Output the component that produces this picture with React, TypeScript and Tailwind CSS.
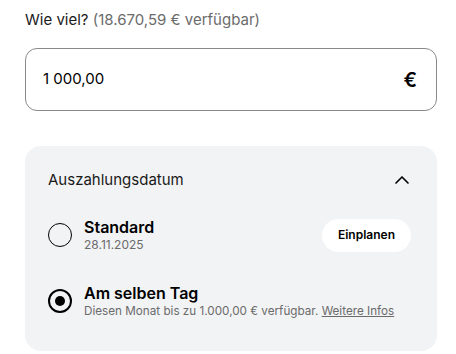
import React from "react";

function Radio({ checked }: { checked: boolean }) {
    return (
        <div
            className={`w-6 h-6 rounded-full border-black flex items-center justify-center shrink-0 ${checked ? "border-[2.5px]" : "border-[1.3px]"}`}
        >
            {checked && <div className="w-[10px] h-[10px] rounded-full bg-black"></div>}
        </div>
    );
}

export default function App() {
    return (
        <div className="w-[456px] h-[354px] bg-white pl-[25px] pr-[19px] pt-[10px]" style={{ fontFamily: "Inter, 'Noto Sans', sans-serif" }}>
            <div className="text-[15px] text-[#1a1a1a] leading-5">
                Wie viel? <span className="text-[#6b6b6b]">(18.670,59 € verfügbar)</span>
            </div>
            <div className="mt-[18px] h-[63px] rounded-[12px] border border-[#8a8a8a] flex items-center justify-between pl-[17px] pr-[19px]">
                <span className="text-[15px] text-black">1 000,00</span>
                <span className="text-[20px] font-semibold text-black">€</span>
            </div>
            <div className="mt-[35px] bg-[#f2f3f5] rounded-[16px] pl-[23px] pr-[26px] pt-[21px] pb-[32px]">
                <div className="flex items-center justify-between h-[26px]">
                    <span className="text-[15px] text-[#1a1a1a]">Auszahlungsdatum</span>
                    <svg width="18" height="18" viewBox="0 0 24 24" fill="none" stroke="black" strokeWidth="2.2" strokeLinecap="round" strokeLinejoin="round">
                        <path d="M4 16l8-8 8 8" />
                    </svg>
                </div>
                <div className="mt-[24px] flex items-center justify-between">
                    <div className="flex items-center gap-3">
                        <Radio checked={false} />
                        <div className="flex flex-col">
                            <span className="text-[16px] font-semibold leading-5 text-black">Standard</span>
                            <span className="text-[12px] text-[#6b6b6b] leading-4">28.11.2025</span>
                        </div>
                    </div>
                    <button className="bg-white rounded-full h-[33px] px-[16px] text-[12px] font-semibold text-black">
                        Einplanen
                    </button>
                </div>
                <div className="mt-[30px] flex items-center gap-3">
                    <Radio checked={true} />
                    <div className="flex flex-col">
                        <span className="text-[16px] font-semibold leading-5 text-black">Am selben Tag</span>
                        <span className="text-[11.7px] text-[#6b6b6b] leading-4">
                            Diesen Monat bis zu 1.000,00 € verfügbar. <span className="underline">Weitere Infos</span>
                        </span>
                    </div>
                </div>
            </div>
        </div>
    );
}
